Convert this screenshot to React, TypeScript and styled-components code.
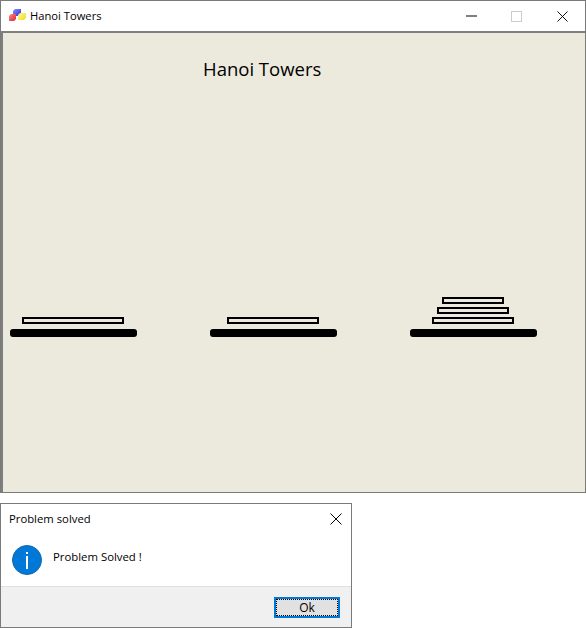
import React from 'react';
import styled, {createGlobalStyle} from "styled-components";

const GlobalStyle = createGlobalStyle`
  html, body {
    margin: 0;
    padding: 0;
    background-color: #ffffff;
  }
  body {
    width: 586px;
    height: 628px;
    overflow: hidden;
    font-family: "Open Sans", "Noto Sans", sans-serif;
    color: #000000;
  }
`
const Page = styled.div`
  display: flex;
  flex-direction: column;
  align-items: flex-start;
  gap: 10px;
`
const Window = styled.section`
  box-sizing: border-box;
  width: 586px;
  height: 493px;
  border: 1px solid #7a7a7a;
  display: flex;
  flex-direction: column;
`
const TitleBar = styled.header`
  height: 30px;
  flex-shrink: 0;
  display: flex;
  align-items: center;
  padding-left: 8px;
  font-size: 11.2px;
`
const LogoSlot = styled.div`
  display: flex;
  margin-bottom: 3px;
`
const TitleText = styled.span`
  flex: 1;
  margin: 0 0 2px 4px;
`
const WinButton = styled.div<{ $width: number }>`
  box-sizing: border-box;
  width: ${p => p.$width}px;
  height: 30px;
  padding-left: 17px;
  display: flex;
  align-items: center;
`
const Canvas = styled.main`
  flex: 1;
  background-color: #ece9dd;
  border-top: 2px solid #7f7f7f;
  border-left: 2px solid #7f7f7f;
  display: flex;
  flex-direction: column;
  align-items: flex-start;
`
const Heading = styled.h1`
  margin: 22px 0 0 200px;
  height: 28px;
  line-height: 28px;
  font-size: 18.5px;
  font-weight: 400;
`
const Towers = styled.div`
  margin: 198px 0 0 7px;
  height: 56px;
  display: flex;
  gap: 73px;
`
const Tower = styled.div`
  width: 127px;
  display: flex;
  flex-direction: column;
  justify-content: flex-end;
  align-items: center;
  gap: 3px;
`
const Disk = styled.div<{ $width: number }>`
  box-sizing: border-box;
  width: ${p => p.$width}px;
  height: 7px;
  margin-right: 1px;
  border: 2px solid #000000;
  background-color: #ece9dd;
`
const Peg = styled.div`
  width: 127px;
  height: 8px;
  margin-top: 2px;
  background-color: #000000;
  border-radius: 3px;
`
const Dialog = styled.section`
  box-sizing: border-box;
  width: 352px;
  height: 125px;
  border: 1px solid #7a7a7a;
  display: flex;
  flex-direction: column;
`
const DialogTitle = styled.header`
  height: 29px;
  display: flex;
  align-items: center;
  justify-content: space-between;
  padding: 0 9px 0 8px;
  font-size: 11.3px;
`
const DialogBody = styled.div`
  flex: 1;
  display: flex;
  align-items: center;
  gap: 11px;
  padding-left: 11px;
  font-size: 11.35px;
`
const Message = styled.span`
  margin-bottom: 6px;
`
const DialogFooter = styled.footer`
  height: 41px;
  box-sizing: border-box;
  background-color: #f0f0f0;
  border-top: 1px solid #dfdfdf;
  display: flex;
  align-items: center;
  justify-content: flex-end;
  padding-right: 11px;
`
const OkButton = styled.button`
  box-sizing: border-box;
  width: 66px;
  height: 21px;
  padding: 0;
  background-color: #e1e1e1;
  border: 2px solid #0078d7;
  outline: 1px dotted #000000;
  outline-offset: -3px;
  font-family: inherit;
  font-size: 12px;
  color: #000000;
`

const CloseIcon: React.FC<{ size: number }> = ({size}) => (
    <svg width={size} height={size} viewBox="0 0 12 12" fill="none" stroke="#000" strokeWidth="1">
        <path d="M0.5 0.5L11.5 11.5M11.5 0.5L0.5 11.5"/>
    </svg>
)

const AppLogo: React.FC = () => (
    <svg width="17" height="12" viewBox="0 0 17 12">
        <defs>
            <linearGradient id="blueCube" x1="0" y1="0" x2="1" y2="1">
                <stop offset="0" stopColor="#8f8ff5"/>
                <stop offset="1" stopColor="#2c2ce0"/>
            </linearGradient>
            <linearGradient id="redCube" x1="0" y1="0" x2="1" y2="1">
                <stop offset="0" stopColor="#f58f8f"/>
                <stop offset="1" stopColor="#e02030"/>
            </linearGradient>
            <linearGradient id="yellowCube" x1="0" y1="0" x2="1" y2="1">
                <stop offset="0" stopColor="#fbf59a"/>
                <stop offset="1" stopColor="#f0e010"/>
            </linearGradient>
        </defs>
        <path d="M4 2L6 0H12V5L10 7H4Z" fill="url(#blueCube)"/>
        <path d="M0 7L2 5H7V10L5 12H0Z" fill="url(#redCube)"/>
        <path d="M9 6L11 4H17V9L15 11H9Z" fill="url(#yellowCube)"/>
    </svg>
)

const InfoIcon: React.FC = () => (
    <svg width="30" height="30" viewBox="0 0 30 30">
        <circle cx="15" cy="15" r="14.5" fill="#0078d7" stroke="#1467ab" strokeWidth="1"/>
        <rect x="14" y="11" width="2" height="13" fill="#fff"/>
        <rect x="14" y="7" width="2" height="2" fill="#fff"/>
    </svg>
)

const App: React.FC = () => {
    const towers: number[][] = [[102], [92], [62, 72, 82]]

    return (
        <Page>
            <GlobalStyle/>
            <Window>
                <TitleBar>
                    <LogoSlot>
                        <AppLogo/>
                    </LogoSlot>
                    <TitleText>Hanoi Towers</TitleText>
                    <WinButton $width={45}>
                        <svg width="11" height="2" viewBox="0 0 11 2">
                            <rect width="11" height="1" y="0.5" fill="#000"/>
                        </svg>
                    </WinButton>
                    <WinButton $width={46}>
                        <svg width="11" height="11" viewBox="0 0 11 11" fill="none" stroke="#cccccc">
                            <rect x="0.5" y="0.5" width="10" height="10"/>
                        </svg>
                    </WinButton>
                    <WinButton $width={45}>
                        <CloseIcon size={11}/>
                    </WinButton>
                </TitleBar>
                <Canvas>
                    <Heading>Hanoi Towers</Heading>
                    <Towers>
                        {towers.map((disks, i) => (
                            <Tower key={i}>
                                {disks.map(width => <Disk key={width} $width={width}/>)}
                                <Peg/>
                            </Tower>
                        ))}
                    </Towers>
                </Canvas>
            </Window>
            <Dialog>
                <DialogTitle>
                    <span>Problem solved</span>
                    <CloseIcon size={12}/>
                </DialogTitle>
                <DialogBody>
                    <InfoIcon/>
                    <Message>Problem Solved !</Message>
                </DialogBody>
                <DialogFooter>
                    <OkButton>Ok</OkButton>
                </DialogFooter>
            </Dialog>
        </Page>
    );
};
export default App;
